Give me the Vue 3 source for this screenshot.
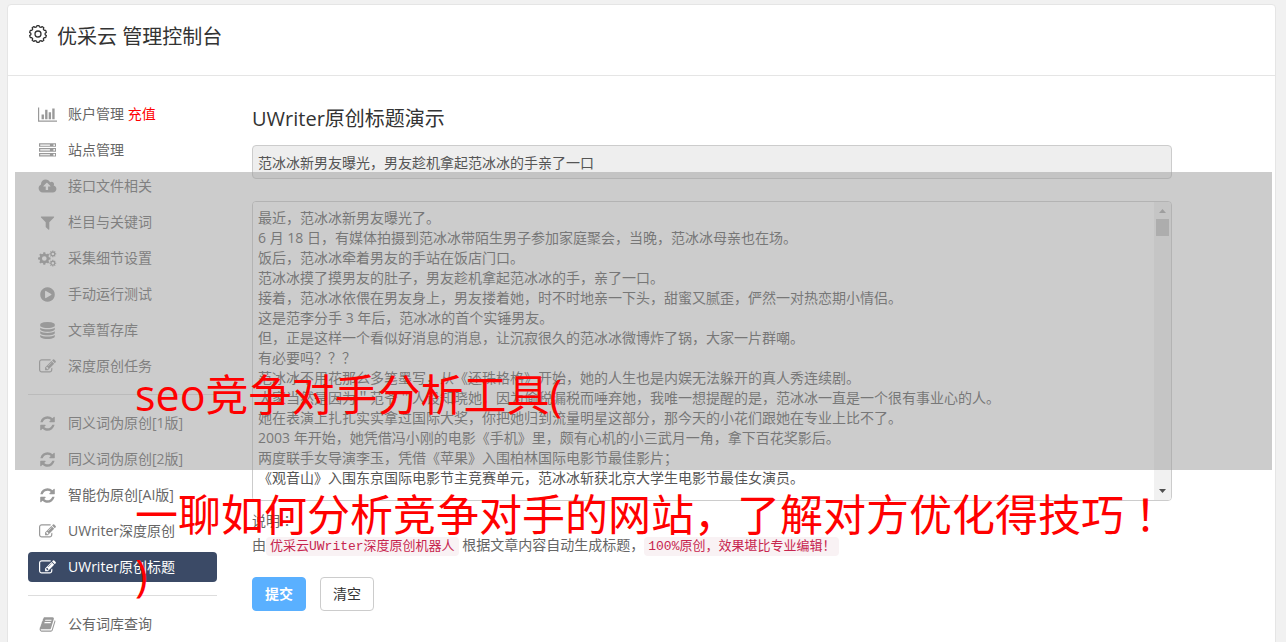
<script setup>
import { ref } from 'vue'

const icons = {
  chart: { box: '0 0 2048 1792', wide: true, d: 'M640 896v512h-256v-512h256zm384-512v1024h-256v-1024h256zm1024 1152v128h-2048v-1536h128v1408h1920zm-640-896v768h-256v-768h256zm384-384v1152h-256v-1152h256z' },
  server: { box: '0 0 1792 1792', d: 'M128 1408h1024v-128h-1024v128zm0-512h1024v-128h-1024v128zm1568 448q0-40-28-68t-68-28-68 28-28 68 28 68 68 28 68-28 28-68zm-1568-960h1024v-128h-1024v128zm1568 448q0-40-28-68t-68-28-68 28-28 68 28 68 68 28 68-28 28-68zm0-512q0-40-28-68t-68-28-68 28-28 68 28 68 68 28 68-28 28-68zm96 832v384h-1792v-384h1792zm0-512v384h-1792v-384h1792zm0-512v384h-1792v-384h1792z' },
  cloud: { box: '-128 0 2048 1792', wide: true, d: 'M1216 864q0-14-9-23l-352-352q-9-9-23-9t-23 9l-351 351q-10 12-10 24 0 14 9 23t23 9h224v352q0 13 9.5 22.5t22.5 9.5h192q13 0 22.5-9.5t9.5-22.5v-352h224q13 0 22.5-9.5t9.5-22.5zm640 288q0 159-112.5 271.5t-271.5 112.5h-1088q-185 0-316.5-131.5t-131.5-316.5q0-130 70-240t188-165q-2-30-2-43 0-212 150-362t362-150q156 0 285.5 87t188.5 231q71-62 166-62 106 0 181 75t75 181q0 76-41 138 130 31 213.5 135.5t83.5 238.5z' },
  filter: { box: '0 0 1792 1792', d: 'M1595 295q17 41-14 70l-493 493v742q0 42-39 59-13 5-25 5-27 0-45-19l-256-256q-19-19-19-45v-486l-493-493q-31-29-14-70 17-39 59-39h1280q42 0 59 39z' },
  play: { box: '0 0 1792 1792', d: 'M896 128q209 0 385.5 103t279.5 279.5 103 385.5-103 385.5-279.5 279.5-385.5 103-385.5-103-279.5-279.5-103-385.5 103-385.5 279.5-279.5 385.5-103zm384 823q32-18 32-55t-32-55l-544-320q-31-19-64-1-32 19-32 56v640q0 37 32 56 16 8 32 8 17 0 32-9z' },
  database: { box: '0 0 1792 1792', d: 'M896 768q237 0 443-43t325-127v170q0 69-103 128t-280 93.5-385 34.5-385-34.5-280-93.5-103-128v-170q119 84 325 127t443 43zm0 768q237 0 443-43t325-127v170q0 69-103 128t-280 93.5-385 34.5-385-34.5-280-93.5-103-128v-170q119 84 325 127t443 43zm0-384q237 0 443-43t325-127v170q0 69-103 128t-280 93.5-385 34.5-385-34.5-280-93.5-103-128v-170q119 84 325 127t443 43zm0-1152q208 0 385 34.5t280 93.5 103 128v128q0 69-103 128t-280 93.5-385 34.5-385-34.5-280-93.5-103-128v-128q0-69 103-128t280-93.5 385-34.5z' },
  edit: { box: '0 0 1792 1792', d: 'M888 1184l116-116-152-152-116 116v56h96v96h56zm440-720q-16-16-33 1l-350 350q-17 17-1 33t33-1l350-350q17-17 1-33zm80 594v190q0 119-84.5 203.5t-203.5 84.5h-832q-119 0-203.5-84.5t-84.5-203.5v-832q0-119 84.5-203.5t203.5-84.5h832q63 0 117 25 15 7 18 23 3 17-9 29l-49 49q-14 14-32 8-23-6-45-6h-832q-66 0-113 47t-47 113v832q0 66 47 113t113 47h832q66 0 113-47t47-113v-126q0-13 9-22l64-64q15-15 35-7t20 29zm-96-738l288 288-672 672h-288v-288zm444 132l-92 92-288-288 92-92q28-28 68-28t68 28l152 152q28 28 28 68t-28 68z' },
  refresh: { box: '0 0 1792 1792', d: 'M1639 1056q0 5-1 7-64 268-268 434.5t-478 166.5q-146 0-282.5-55t-243.5-157l-129 129q-19 19-45 19t-45-19-19-45v-448q0-26 19-45t45-19h448q26 0 45 19t19 45-19 45l-137 137q71 66 161 102t187 36q134 0 250-65t186-179q11-17 53-117 8-23 30-23h192q13 0 22.5 9.5t9.5 22.5zm25-800v448q0 26-19 45t-45 19h-448q-26 0-45-19t-19-45 19-45l138-138q-148-137-349-137-134 0-250 65t-186 179q-11 17-53 117-8 23-30 23h-199q-13 0-22.5-9.5t-9.5-22.5v-7q65-268 270-434.5t480-166.5q146 0 284 55.5t245 156.5l130-129q19-19 45-19t45 19 19 45z' },
  book: { box: '0 0 1792 1792', d: 'M1703 478q40 57 18 129l-275 906q-19 64-76.5 107.5t-122.5 43.5h-923q-77 0-148.5-53.5t-99.5-131.5q-24-67-2-127 0-4 3-27t4-37q1-8-3-21.5t-3-19.5q2-11 8-21t16.5-23.5 16.5-23.5q23-38 45-91.5t30-91.5q3-10 .5-30t-.5-28q3-11 17-28t17-23q21-36 42-92t25-90q1-9-2.5-32t.5-28q4-13 22-30.5t22-22.5q19-26 42.5-84.5t27.5-96.5q1-8-3-25.5t-2-26.5q2-8 9-18t18-23 17-21q8-12 16.5-30.5t15-35 16-36 19.5-32 26.5-23.5 36-11.5 47.5 5.5l-1 3q38-9 51-9h761q74 0 114 56t18 130l-274 906q-36 119-71.5 153.5t-128.5 34.5h-869q-27 0-38 15-11 16-1 43 24 70 144 70h923q29 0 56-15.5t35-41.5l300-987q7-22 5-57 38 15 59 43zm-1064 2q-4 13 2 22.5t20 9.5h608q13 0 25.5-9.5t16.5-22.5l21-64q4-13-2-22.5t-20-9.5h-608q-13 0-25.5 9.5t-16.5 22.5zm-83 256q-4 13 2 22.5t20 9.5h608q13 0 25.5-9.5t16.5-22.5l21-64q4-13-2-22.5t-20-9.5h-608q-13 0-25.5 9.5t-16.5 22.5z' }
}

// Closed outline of a cog: the rim alternates between two radii.
function cog(cx, cy, inner, outer, teeth) {
  const step = (Math.PI * 2) / teeth
  const points = []
  for (let i = 0; i < teeth; i++) {
    for (const [offset, r] of [[-0.32, inner], [-0.2, outer], [0.2, outer], [0.32, inner]]) {
      const a = (i + offset) * step - Math.PI / 2
      points.push(`${(cx + r * Math.cos(a)).toFixed(2)} ${(cy + r * Math.sin(a)).toFixed(2)}`)
    }
  }
  return `M${points.join('L')}Z`
}
function hole(cx, cy, r) {
  return `M${cx - r} ${cy}a${r} ${r} 0 1 0 ${2 * r} 0a${r} ${r} 0 1 0 ${-2 * r} 0Z`
}
icons.cogs = {
  box: '0 0 2048 1792',
  wide: true,
  d: [
    [680, 896, 520, 680, 8, 250],
    [1600, 400, 260, 370, 8, 135],
    [1600, 1400, 260, 370, 8, 135]
  ].map(([x, y, a, b, n, h]) => cog(x, y, a, b, n) + hole(x, y, h)).join('')
}
const headerCog = cog(10, 10, 7.2, 8.5, 10)

const groups = [
  [
    { icon: 'chart', text: '账户管理', extra: '充值' },
    { icon: 'server', text: '站点管理' },
    { icon: 'cloud', text: '接口文件相关' },
    { icon: 'filter', text: '栏目与关键词' },
    { icon: 'cogs', text: '采集细节设置' },
    { icon: 'play', text: '手动运行测试' },
    { icon: 'database', text: '文章暂存库' },
    { icon: 'edit', text: '深度原创任务' }
  ],
  [
    { icon: 'refresh', text: '同义词伪原创[1版]' },
    { icon: 'refresh', text: '同义词伪原创[2版]' },
    { icon: 'refresh', text: '智能伪原创[AI版]' },
    { icon: 'edit', text: 'UWriter深度原创' },
    { icon: 'edit', text: 'UWriter原创标题', active: true }
  ],
  [{ icon: 'book', text: '公有词库查询' }]
]

const title = ref('范冰冰新男友曝光，男友趁机拿起范冰冰的手亲了一口')
const article = ref(`最近，范冰冰新男友曝光了。
6 月 18 日，有媒体拍摄到范冰冰带陌生男子参加家庭聚会，当晚，范冰冰母亲也在场。
饭后，范冰冰牵着男友的手站在饭店门口。
范冰冰摸了摸男友的肚子，男友趁机拿起范冰冰的手，亲了一口。
接着，范冰冰依偎在男友身上，男友搂着她，时不时地亲一下头，甜蜜又腻歪，俨然一对热恋期小情侣。
这是范李分手 3 年后，范冰冰的首个实锤男友。
但，正是这样一个看似好消息的消息，让沉寂很久的范冰冰微博炸了锅，大家一片群嘲。
有必要吗？？？
范冰冰不用花那么多笔墨写，从《还珠格格》开始，她的人生也是内娱无法躲开的真人秀连续剧。
大家当然是因为＂范爷＂人设知晓她，因为偷税漏税而唾弃她，我唯一想提醒的是，范冰冰一直是一个很有事业心的人。
她在表演上扎扎实实拿过国际大奖，你把她归到流量明星这部分，那今天的小花们跟她在专业上比不了。
2003 年开始，她凭借冯小刚的电影《手机》里，颇有心机的小三武月一角，拿下百花奖影后。
两度联手女导演李玉，凭借《苹果》入围柏林国际电影节最佳影片；
《观音山》入围东京国际电影节主竞赛单元，范冰冰斩获北京大学生电影节最佳女演员。`)

function clearAll() {
  title.value = ''
  article.value = ''
}
</script>

<template>
  <div class="page">
    <div class="panel">
      <header class="head">
        <svg class="head-icon" viewBox="0 0 20 20" aria-hidden="true">
          <path :d="headerCog" />
          <circle cx="10" cy="10" r="3" />
        </svg>
        <h1>优采云 管理控制台</h1>
      </header>
      <div class="body">
        <nav class="side">
          <ul v-for="(group, g) in groups" :key="g">
            <li v-for="item in group" :key="item.text">
              <a href="#" :class="{ active: item.active }">
                <span class="icon-cell">
                  <svg :class="['icon', { wide: icons[item.icon].wide }]" :viewBox="icons[item.icon].box" aria-hidden="true">
                    <path :d="icons[item.icon].d" fill-rule="evenodd" />
                  </svg>
                </span>
                <span>{{ item.text }} <em v-if="item.extra">{{ item.extra }}</em></span>
              </a>
            </li>
          </ul>
        </nav>
        <main class="main">
          <h2><label for="title">UWriter原创标题演示</label></h2>
          <form @submit.prevent>
            <input id="title" v-model="title" class="field" type="text" readonly />
            <div class="article">
              <textarea v-model="article" aria-label="文章内容" spellcheck="false"></textarea>
              <div class="scroll">
                <svg class="up" viewBox="0 0 17 17" aria-hidden="true"><path d="M5 11h7L8.500 7z" /></svg>
                <div class="thumb"></div>
                <svg class="down" viewBox="0 0 17 17" aria-hidden="true"><path d="M5 6h7L8.500 10z" /></svg>
              </div>
            </div>
            <div class="note">
              <p>说明<span class="mark">：</span></p>
              <p>由<code>优采云UWriter深度原创机器人</code> 根据文章内容自动生成标题，<code>100%原创，效果堪比专业编辑！</code></p>
            </div>
            <div class="actions">
              <button class="primary" type="submit">提交</button>
              <button type="button" @click="clearAll">清空</button>
            </div>
          </form>
        </main>
      </div>
    </div>
    <div class="band"></div>
    <div class="caption">seo竞争对手分析工具(<br /><br />一聊如何分析竞争对手的网站，了解对方优化得技巧<span class="mark">！</span><br />)</div>
  </div>
</template>

<style>
html,
body {
  height: 100%;
  overflow: hidden;
}
</style>

<style scoped>
* {
  box-sizing: border-box;
}
.page {
  position: relative;
  height: 100vh;
  overflow: hidden;
  padding: 4px 10px 0 7px;
  background: #f1f1f1;
  color: #666;
  font: 14px/20px "Open Sans", "Noto Sans CJK SC", sans-serif;
  text-spacing-trim: space-all;
}
.panel {
  min-height: 100vh;
  background: #fff;
  border: 1px solid #e5e5e5;
  border-radius: 4px;
}
.head {
  display: flex;
  align-items: flex-start;
  gap: 9px;
  height: 71px;
  padding: 19px 20px 0;
  border-bottom: 1px solid #e5e5e5;
}
.head-icon {
  width: 20px;
  height: 20px;
  fill: none;
  stroke: #333;
  stroke-width: 1.3;
  stroke-linejoin: round;
}
h1,
h2 {
  margin: 0;
  color: #333;
  font-size: 20px;
  font-weight: 400;
  line-height: 24px;
}
h1 {
  line-height: 26px;
}
.body {
  display: flex;
  gap: 35px;
  padding: 23px 19px 0 20px;
}
.side {
  flex: 0 0 189px;
}
ul {
  list-style: none;
  margin: 0;
  padding: 0;
}
ul + ul {
  margin-top: 13px;
  padding-top: 13px;
  border-top: 1px solid #ddd;
}
li {
  margin-bottom: 6px;
}
.side a {
  display: flex;
  align-items: center;
  gap: 11px;
  height: 30px;
  padding: 0 10px;
  border-radius: 4px;
  color: #666;
  text-decoration: none;
  white-space: nowrap;
}
.side em {
  color: #f00;
  font-style: normal;
}
.icon-cell {
  display: flex;
  justify-content: center;
  width: 19px;
}
.icon {
  width: 17px;
  height: 17px;
  fill: #999;
}
.icon.wide {
  width: 19px;
}
.side a.active {
  background: #3b4a66;
  color: #fff;
}
.active .icon {
  fill: #fff;
}
.main {
  flex: 1;
  min-width: 0;
  padding-top: 8px;
}
.field,
.article {
  width: calc(100% * 11 / 12);
  border: 1px solid #ccc;
  border-radius: 4px;
}
.field {
  display: block;
  height: 34px;
  margin-top: 14px;
  padding: 0 5px;
  background: #eee;
  color: #555;
  font: inherit;
}
.article {
  display: flex;
  height: 300px;
  margin-top: 22px;
  overflow: hidden;
}
textarea {
  flex: 1;
  min-width: 0;
  padding: 6px 5px;
  border: 0;
  outline: 0;
  resize: none;
  overflow: hidden;
  background: #fff;
  color: #555;
  font: inherit;
}
.scroll {
  display: flex;
  flex-direction: column;
  align-items: center;
  width: 17px;
  background: #f1f1f1;
}
.scroll svg {
  width: 17px;
  height: 17px;
}
.up {
  fill: #a3a3a3;
}
.down {
  fill: #505050;
  margin-top: auto;
}
.thumb {
  width: 13px;
  height: 17px;
  background: #c1c1c1;
}
.note {
  margin-top: 8px;
}
.note p {
  margin: 0;
  line-height: 24px;
}
.mark {
  font-family: "Noto Sans CJK JP", sans-serif;
  line-height: 1;
}
code {
  padding: 2px 4px;
  border-radius: 4px;
  background: #f9f2f4;
  color: #c7254e;
  font: 13px/15px "Liberation Mono", "Noto Sans CJK SC", monospace;
}
.actions {
  display: flex;
  gap: 14px;
  margin-top: 20px;
}
button {
  width: 54px;
  height: 34px;
  padding: 0;
  border: 1px solid #ccc;
  border-radius: 4px;
  background: #fff;
  color: #333;
  font: inherit;
}
.primary {
  border-color: #5ab0ff;
  background: #5ab0ff;
  color: #fff;
  font-weight: 700;
}
.band {
  position: absolute;
  top: 172px;
  right: 14px;
  left: 15px;
  height: 298px;
  background: rgba(153, 153, 153, 0.5);
  pointer-events: none;
}
.caption {
  position: absolute;
  top: 365px;
  left: 135px;
  color: #f00;
  font-size: 43px;
  line-height: 60px;
  white-space: nowrap;
  pointer-events: none;
}
</style>
